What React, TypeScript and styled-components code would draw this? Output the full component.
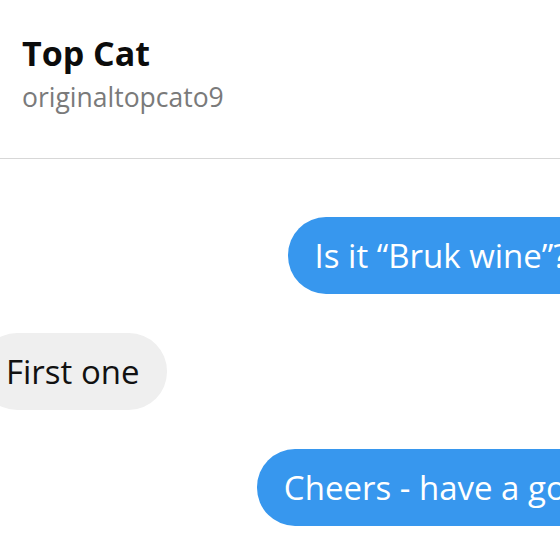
import styled, { createGlobalStyle } from 'styled-components';

const GlobalStyle = createGlobalStyle`
  html, body {
    margin: 0;
    padding: 0;
    background: #ffffff;
    overflow: hidden;
    width: 560px;
    height: 560px;
  }
  body {
    font-family: "Open Sans", "Noto Sans", sans-serif;
    color: #111111;
  }
`;

type Message = { id: number; text: string; mine: boolean };

const MESSAGES: Message[] = [
  { id: 1, text: 'Is it \u201cBruk wine\u201d? or Brit', mine: true },
  { id: 2, text: 'First one', mine: false },
  { id: 3, text: 'Cheers - have a good one', mine: true },
];

const StyledChat = styled.div`
  width: 560px;
  height: 560px;
  display: flex;
  flex-direction: column;
`;

const ChatHeader = styled.header`
  padding: 31px 22px 0;
  height: 159px;
  box-sizing: border-box;
  border-bottom: 1px solid #d7d7d7;
`;

const ChatTitle = styled.h1`
  margin: 0;
  font-size: 34px;
  font-weight: 700;
  line-height: 44px;
  color: #0c0c0c;
`;

const ChatSubtitle = styled.div`
  margin-top: 5px;
  font-size: 26.5px;
  line-height: 34px;
  color: #7a7a7a;
`;

const Thread = styled.div`
  display: flex;
  flex-direction: column;
  gap: 39px;
  padding-top: 58px;
  margin-left: -21px;
  width: 721px;
`;

const Bubble = styled.div<{ $mine: boolean }>`
  align-self: ${(p) => (p.$mine ? 'flex-end' : 'flex-start')};
  padding: 16px 27px;
  border-radius: 38px;
  font-size: 33px;
  line-height: 45px;
  white-space: nowrap;
  background: ${(p) => (p.$mine ? '#3797ee' : '#efefef')};
  color: ${(p) => (p.$mine ? '#ffffff' : '#111111')};
`;

export default function App() {
  return (
    <>
      <GlobalStyle />
      <StyledChat>
        <ChatHeader>
          <ChatTitle>Top Cat</ChatTitle>
          <ChatSubtitle>originaltopcato9</ChatSubtitle>
        </ChatHeader>
        <Thread>
          {MESSAGES.map((m) => (
            <Bubble key={m.id} $mine={m.mine}>
              {m.text}
            </Bubble>
          ))}
        </Thread>
      </StyledChat>
    </>
  );
}
